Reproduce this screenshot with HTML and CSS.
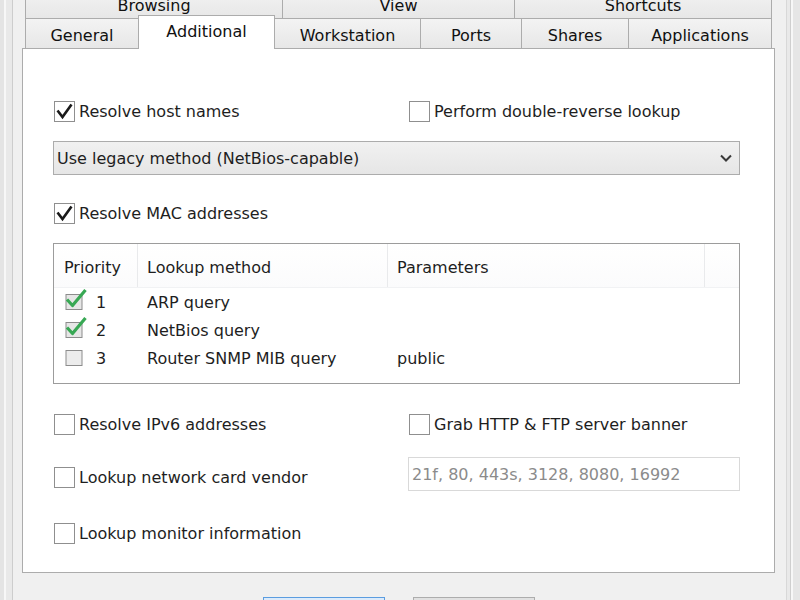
FILE: index.html
```html
<!DOCTYPE html>
<html>
  <head>
    <meta charset="UTF-8">
    <title>Options - Additional</title>
    <link rel="stylesheet" href="styles.css">
  </head>
  <body>
    <div class="window">
      <div class="frame frame-left"></div>
      <div class="dialog">

        <div class="tabs">
          <div class="tab-row">
            <div class="tab t-browsing">Browsing</div>
            <div class="tab t-view">View</div>
            <div class="tab t-shortcuts">Shortcuts</div>
          </div>
          <div class="tab-row">
            <div class="tab t-general">General</div>
            <div class="tab selected t-additional">Additional</div>
            <div class="tab t-workstation">Workstation</div>
            <div class="tab t-ports">Ports</div>
            <div class="tab t-shares">Shares</div>
            <div class="tab t-applications">Applications</div>
          </div>
        </div>

        <div class="panel">
          <div class="pair">
            <label class="check">
              <span class="box"><svg class="tick" viewBox="0 0 19 19" width="19" height="19"><polyline points="2.5,8.5 7.5,15 16.5,2.5" fill="none" stroke="#1a1a1a" stroke-width="2.6"/></svg></span>
              <span>Resolve host names</span>
            </label>
            <label class="check">
              <span class="box"></span>
              <span>Perform double-reverse lookup</span>
            </label>
          </div>

          <div class="select">
            <span class="value">Use legacy method (NetBios-capable)</span>
            <svg class="chevron" viewBox="0 0 12 8" width="12" height="8"><polyline points="1,1.5 6,6.5 11,1.5" fill="none" stroke="#3a3a3a" stroke-width="2"/></svg>
          </div>

          <label class="check mac">
            <span class="box"><svg class="tick" viewBox="0 0 19 19" width="19" height="19"><polyline points="2.5,8.5 7.5,15 16.5,2.5" fill="none" stroke="#1a1a1a" stroke-width="2.6"/></svg></span>
            <span>Resolve MAC addresses</span>
          </label>

          <div class="listbox">
            <div class="lv-head">
              <div class="col c1">Priority</div>
              <div class="col c2">Lookup method</div>
              <div class="col c3">Parameters</div>
              <div class="col c4"></div>
            </div>
            <div class="lv-row">
              <div class="cell c1">
                <svg class="state" viewBox="0 0 22 22" width="22" height="22"><rect x="1" y="3.5" width="16" height="15" fill="#e6e6e6" stroke="#8c8c8c"/><polyline points="2,8.5 7.5,14.5 20.5,-1" fill="none" stroke="#38a854" stroke-width="3.2" stroke-linejoin="round"/></svg>
                <span class="num">1</span>
              </div>
              <div class="cell c2">ARP query</div>
              <div class="cell c3"></div>
            </div>
            <div class="lv-row">
              <div class="cell c1">
                <svg class="state" viewBox="0 0 22 22" width="22" height="22"><rect x="1" y="3.5" width="16" height="15" fill="#e6e6e6" stroke="#8c8c8c"/><polyline points="2,8.5 7.5,14.5 20.5,-1" fill="none" stroke="#38a854" stroke-width="3.2" stroke-linejoin="round"/></svg>
                <span class="num">2</span>
              </div>
              <div class="cell c2">NetBios query</div>
              <div class="cell c3"></div>
            </div>
            <div class="lv-row">
              <div class="cell c1">
                <svg class="state" viewBox="0 0 22 22" width="22" height="22"><rect x="1" y="3.5" width="16" height="15" fill="#ececec" stroke="#8c8c8c"/></svg>
                <span class="num">3</span>
              </div>
              <div class="cell c2">Router SNMP MIB query</div>
              <div class="cell c3">public</div>
            </div>
          </div>

          <div class="pair ipv6">
            <label class="check">
              <span class="box"></span>
              <span>Resolve IPv6 addresses</span>
            </label>
            <label class="check">
              <span class="box"></span>
              <span>Grab HTTP &amp; FTP server banner</span>
            </label>
          </div>

          <div class="pair vendor">
            <label class="check">
              <span class="box"></span>
              <span>Lookup network card vendor</span>
            </label>
            <div class="textbox">21f, 80, 443s, 3128, 8080, 16992</div>
          </div>

          <label class="check monitor">
            <span class="box"></span>
            <span>Lookup monitor information</span>
          </label>
        </div>

        <div class="buttons">
          <div class="btn default"></div>
          <div class="btn"></div>
        </div>
      </div>
      <div class="frame frame-right"></div>
    </div>
  </body>
</html>
```

FILE: styles.css
```css
*{
  box-sizing: border-box;
}
html, body{
  margin: 0;
  padding: 0;
  width: 100%;
  height: 100%;
  overflow: hidden;
}
body{
  background: #f0f0f0;
  font-family: 'DejaVu Sans', 'Verdana', sans-serif;
  font-size: 16px;
  line-height: 19px;
  color: #1e1e1e;
}
.window{
  display: flex;
  height: 600px;
}

/* window border strips */
.frame{
  flex: none;
  height: 100%;
}
.frame-left{
  width: 13px;
  background: linear-gradient(to right, #e4e4e4 0, #e4e4e4 4px, #f7f7f7 4px, #f7f7f7 6px, #e9e9e9 6px, #e9e9e9 12px, #cdcdcd 12px);
}
.frame-right{
  width: 14px;
  background: linear-gradient(to right, #d8d8d8 0, #d8d8d8 1px, #e9e9e9 1px, #e9e9e9 4px, #cfcfcf 4px, #cfcfcf 5px, #f7f7f7 5px, #f7f7f7 7px, #e6e6e6 7px);
}

.dialog{
  width: 773px;
  height: 600px;
  overflow: hidden;
  padding: 0 11px 0 9px;
  display: flex;
  flex-direction: column;
}

/* tabs */
.tabs{
  flex: none;
  margin-top: -12px;
  padding-left: 3px;
}
.tab-row{
  display: flex;
}
.tab{
  flex: none;
  height: 30px;
  padding-top: 7px;
  margin-left: -1px;
  text-align: center;
  white-space: nowrap;
  border: 1px solid #acacac;
  border-bottom: none;
  background: linear-gradient(#f3f3f3, #e7e7e7);
  color: #111;
}
.tab:first-child{
  margin-left: 0;
}
.tab.selected{
  position: relative;
  z-index: 1;
  height: 34px;
  margin-top: -3px;
  margin-bottom: -1px;
  padding-top: 6px;
  background: #fff;
}
.t-browsing{ width: 258px; }
.t-view{ width: 233px; }
.t-shortcuts{ width: 258px; }
.t-general{ width: 114px; }
.t-additional{ width: 137px; }
.t-workstation{ width: 147px; }
.t-ports{ width: 102px; }
.t-shares{ width: 108px; }
.t-applications{ width: 144px; }

/* page */
.panel{
  flex: none;
  height: 525px;
  border: 1px solid #acacac;
  background: #fff;
  padding: 52px 34px 0 31px;
  display: flex;
  flex-direction: column;
}
.pair{
  display: grid;
  grid-template-columns: 355px 1fr;
  align-items: start;
}
.check{
  display: flex;
  align-items: center;
  height: 21px;
  white-space: nowrap;
}
.check .box{
  flex: none;
  width: 21px;
  height: 21px;
  margin-right: 4px;
  border: 1px solid #8f8f8f;
  background: #fff;
}
.tick{
  display: block;
}

.select{
  margin-top: 19px;
  margin-left: -1px;
  height: 34px;
  display: flex;
  align-items: center;
  padding: 0 7px 0 3px;
  border: 1px solid #acacac;
  background: linear-gradient(#f1f1f1, #e6e6e6);
}
.select .value{
  flex: 1;
}
.chevron{
  display: block;
}

.mac{
  margin-top: 28px;
}

/* list view */
.listbox{
  margin-top: 19px;
  margin-left: -1px;
  height: 141px;
  border: 1px solid #9c9c9c;
  background: #fff;
}
.lv-head{
  display: flex;
  height: 44px;
  border-bottom: 1px solid #f1f2f4;
  background: linear-gradient(#fff, #fbfbfc);
}
.lv-head .col{
  padding: 14px 0 0 9px;
  border-right: 1px solid #e9eaec;
}
.lv-head .c4{
  border-right: none;
}
.c1{ width: 84px; flex: none; }
.c2{ width: 250px; flex: none; }
.c3{ width: 317px; flex: none; }
.c4{ flex: 1; }
.lv-head .c1{
  padding-left: 10px;
}
.lv-row{
  display: flex;
  align-items: center;
  height: 28px;
}
.cell{
  padding-left: 9px;
  white-space: nowrap;
}
.cell.c1{
  display: flex;
  align-items: center;
  padding-left: 11px;
}
.state{
  display: block;
  overflow: visible;
}
.num{
  margin-left: 9px;
}

.ipv6{
  margin-top: 30px;
}
.vendor{
  margin-top: 22px;
}
.vendor .check{
  margin-top: 10px;
}
.textbox{
  height: 34px;
  margin-left: -1px;
  padding: 7px 0 0 3px;
  border: 1px solid #d9d9d9;
  background: #fff;
  color: #8b8b8b;
  white-space: nowrap;
}
.monitor{
  margin-top: 32px;
}

/* dialog buttons, only their top edge is in view */
.buttons{
  flex: none;
  display: flex;
  justify-content: center;
  gap: 28px;
  margin-top: 24px;
}
.btn{
  width: 122px;
  height: 34px;
  border: 1px solid #adadad;
  background: #e1e1e1;
}
.btn.default{
  border-color: #5b9de0;
  background: #dcebfb;
}
```
